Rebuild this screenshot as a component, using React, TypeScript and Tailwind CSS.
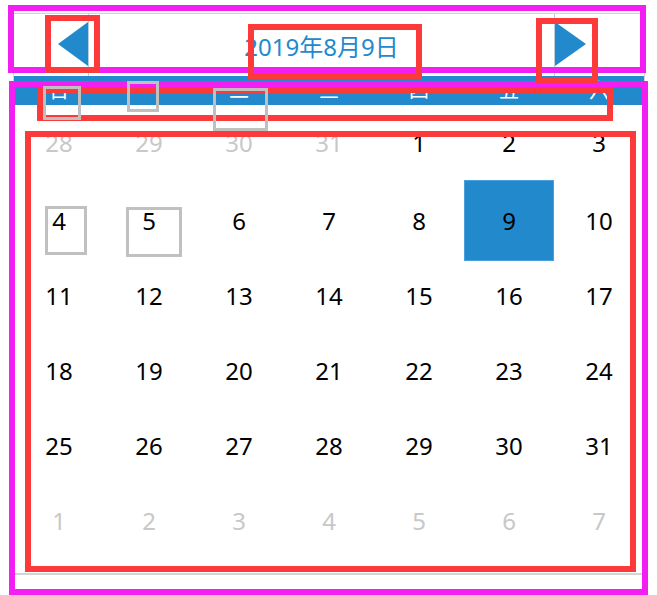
import React from 'react'

const weekdays = ['日', '一', '二', '三', '四', '五', '六']

const rows: { d: number; muted?: boolean }[][] = [
  [{ d: 28, muted: true }, { d: 29, muted: true }, { d: 30, muted: true }, { d: 31, muted: true }, { d: 1 }, { d: 2 }, { d: 3 }],
  [{ d: 4 }, { d: 5 }, { d: 6 }, { d: 7 }, { d: 8 }, { d: 9 }, { d: 10 }],
  [{ d: 11 }, { d: 12 }, { d: 13 }, { d: 14 }, { d: 15 }, { d: 16 }, { d: 17 }],
  [{ d: 18 }, { d: 19 }, { d: 20 }, { d: 21 }, { d: 22 }, { d: 23 }, { d: 24 }],
  [{ d: 25 }, { d: 26 }, { d: 27 }, { d: 28 }, { d: 29 }, { d: 30 }, { d: 31 }],
  [{ d: 1, muted: true }, { d: 2, muted: true }, { d: 3, muted: true }, { d: 4, muted: true }, { d: 5, muted: true }, { d: 6, muted: true }, { d: 7, muted: true }],
]

// debug overlay boxes drawn over the calendar
const marks = [
  'left-[8px] top-[5px] w-[638px] h-[68px] border-[6px] border-[#f21ef2]',
  'left-[9px] top-[81px] w-[639px] h-[514px] border-[6px] border-[#f21ef2]',
  'left-[45px] top-[15px] w-[55px] h-[58px] border-[6px] border-[#fd3a3a]',
  'left-[248px] top-[24px] w-[174px] h-[55px] border-[6px] border-[#fd3a3a]',
  'left-[536px] top-[18px] w-[62px] h-[65px] border-[6px] border-[#fd3a3a]',
  'left-[37px] top-[87px] w-[576px] h-[34px] border-[6px] border-[#fd3a3a]',
  'left-[25px] top-[131px] w-[611px] h-[441px] border-[6px] border-[#fd3a3a]',
  'left-[43px] top-[86px] w-[38px] h-[34px] border-[3px] border-[#c0c0c0]',
  'left-[127px] top-[81px] w-[32px] h-[31px] border-[3px] border-[#c0c0c0]',
  'left-[213px] top-[88px] w-[55px] h-[43px] border-[3px] border-[#c0c0c0]',
  'left-[45px] top-[206px] w-[42px] h-[49px] border-[3px] border-[#c0c0c0]',
  'left-[126px] top-[207px] w-[56px] h-[50px] border-[3px] border-[#c0c0c0]',
]

export default function App() {
  return (
    <div className="relative w-[657px] h-[595px] bg-white overflow-hidden" style={{ fontFamily: '"Noto Sans", "Noto Sans CJK SC", sans-serif' }}>
      <div className="ml-[13px] mt-[13px] w-[632px] border-x border-t border-[#d4d4d4]">
        <div className="flex h-[62px]">
          <div className="w-[75px] flex justify-end border-r border-[#b8cfe0]">
            <svg width="30" height="44" viewBox="0 0 30 44" className="mt-[8px]">
              <polygon points="0,22 30,0 30,44" fill="#2389cd" />
            </svg>
          </div>
          <div className="flex-1 flex items-center justify-center text-[24px] text-[#2389cd] pt-[3px]">2019年8月9日</div>
          <div className="w-[90px] flex border-l border-[#b8cfe0]">
            <svg width="31" height="44" viewBox="0 0 31 44" className="mt-[8px]">
              <polygon points="0,0 31,22 0,44" fill="#2389cd" />
            </svg>
          </div>
        </div>
        <div className="grid grid-cols-7 h-[29px] bg-[#2389cd] text-white text-[20px] leading-[29px]">
          {weekdays.map((w) => (
            <div key={w} className="text-center">{w}</div>
          ))}
        </div>
        {rows.map((row, i) => (
          <div key={i} className={`grid grid-cols-7 ${i === 1 ? 'h-[81px]' : 'h-[75px]'}`}>
            {row.map((c, j) => (
              <div
                key={j}
                className={`flex items-center justify-center text-[24px] ${i > 1 ? 'pb-[5px]' : ''} ${c.muted ? 'text-[#c8c8c8]' : 'text-black'} ${i === 1 && c.d === 9 ? 'bg-[#2389cd] border border-[#4aa0da]' : ''}`}
              >
                {c.d}
              </div>
            ))}
          </div>
        ))}
        <div className="h-[14px] border-b-2 border-[#d4d4d4]" />
      </div>
      {marks.map((m, i) => (
        <div key={i} className={`absolute pointer-events-none ${m}`} />
      ))}
    </div>
  )
}
